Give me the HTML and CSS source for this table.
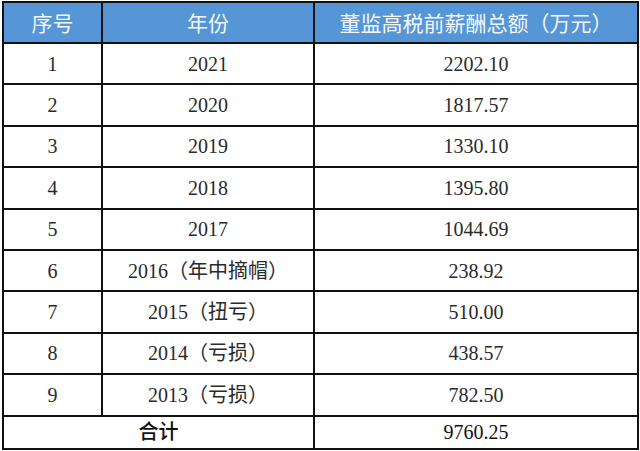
FILE: index.html
```html
<!DOCTYPE html>
<html lang="zh">
<head>
<meta charset="utf-8">
<link rel="stylesheet" href="styles.css">
</head>
<body>
<table class="pay">
  <colgroup>
    <col class="c1"><col class="c2"><col class="c3">
  </colgroup>
  <thead>
    <tr class="head"><th>序号</th><th>年份</th><th>董监高税前薪酬总额（万元）</th></tr>
  </thead>
  <tbody>
    <tr class="row"><td>1</td><td>2021</td><td>2202.10</td></tr>
    <tr class="row"><td>2</td><td>2020</td><td>1817.57</td></tr>
    <tr class="row"><td>3</td><td>2019</td><td>1330.10</td></tr>
    <tr class="row"><td>4</td><td>2018</td><td>1395.80</td></tr>
    <tr class="row"><td>5</td><td>2017</td><td>1044.69</td></tr>
    <tr class="row"><td>6</td><td>2016（年中摘帽）</td><td>238.92</td></tr>
    <tr class="row"><td>7</td><td>2015（扭亏）</td><td>510.00</td></tr>
    <tr class="row"><td>8</td><td>2014（亏损）</td><td>438.57</td></tr>
    <tr class="row"><td>9</td><td>2013（亏损）</td><td>782.50</td></tr>
    <tr class="total"><td colspan="2" class="label">合计</td><td>9760.25</td></tr>
  </tbody>
</table>
</body>
</html>
```
FILE: styles.css
```css
html, body {
  margin: 0;
  padding: 0;
  background: #fff;
}
body {
  padding: 1px 0 0 2px;
}
.pay {
  border-collapse: collapse;
  width: 635px;
  table-layout: fixed;
  font-family: "Liberation Serif", "Noto Sans CJK SC", serif;
  color: #2a2a2a;
}
.c1 { width: 99px; }
.c2 { width: 212px; }
.c3 { width: 324px; }
.pay th, .pay td {
  border: 2px solid #111;
  text-align: center;
  padding: 0;
  vertical-align: middle;
}
.head th {
  background: #5696d6;
  color: #f2f6fb;
  font-family: "Noto Sans CJK SC", sans-serif;
  font-weight: 400;
  font-size: 21px;
  height: 39px;
  line-height: 1;
}
.row td {
  height: 39.4px;
  font-size: 20px;
  line-height: 1;
}
.total td {
  height: 31px;
  font-size: 20px;
  line-height: 1;
  color: #111;
}
.total .label {
  font-weight: 500;
}
```
